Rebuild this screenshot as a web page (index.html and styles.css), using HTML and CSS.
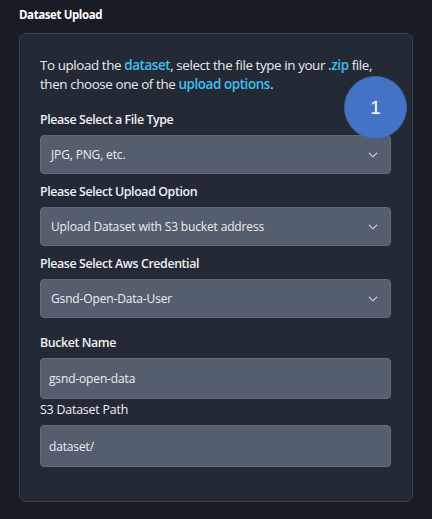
FILE: index.html
```html
<!DOCTYPE html>
<html>
<head>
<meta charset="utf-8">
<link rel="stylesheet" href="styles.css">
</head>
<body>
<div class="page">
  <h1 class="title">Dataset Upload</h1>
  <div class="card">
    <p class="intro">To upload the <span class="hl">dataset</span>, select the file type in your <span class="hl">.zip</span> file, then choose one of the <span class="hl">upload options</span>.</p>
    <div class="field">
      <label class="label">Please Select a File Type</label>
      <div class="select"><span>JPG, PNG, etc.</span><svg class="chev" width="10" height="6" viewBox="0 0 10 6"><path d="M1 0.8 L5 4.8 L9 0.8" fill="none" stroke="#d8dbe0" stroke-width="1.1"/></svg></div>
    </div>
    <div class="field">
      <label class="label">Please Select Upload Option</label>
      <div class="select"><span>Upload Dataset with S3 bucket address</span><svg class="chev" width="10" height="6" viewBox="0 0 10 6"><path d="M1 0.8 L5 4.8 L9 0.8" fill="none" stroke="#d8dbe0" stroke-width="1.1"/></svg></div>
    </div>
    <div class="field">
      <label class="label">Please Select Aws Credential</label>
      <div class="select"><span>Gsnd-Open-Data-User</span><svg class="chev" width="10" height="6" viewBox="0 0 10 6"><path d="M1 0.8 L5 4.8 L9 0.8" fill="none" stroke="#d8dbe0" stroke-width="1.1"/></svg></div>
    </div>
    <div class="field field-text">
      <label class="label">Bucket Name</label>
      <div class="input">gsnd-open-data</div>
    </div>
    <div class="field field-text2">
      <label class="label light">S3 Dataset Path</label>
      <div class="input">dataset/</div>
    </div>
    <div class="badge">1</div>
  </div>
</div>
</body>
</html>
```
FILE: styles.css
```css
* { box-sizing: border-box; }
html, body { margin: 0; padding: 0; }
body {
  background: #171c25;
  font-family: "Open Sans", "Noto Sans", sans-serif;
  color: #e4e6ea;
  width: 432px;
  height: 519px;
  overflow: hidden;
}
.page {
  padding: 5px 19px 0 19px;
  height: 519px;
}
.title {
  margin: 0;
  font-size: 11.5px;
  font-weight: 700;
  line-height: 20px;
  color: #ffffff;
  letter-spacing: -0.4px;
}
.card {
  position: relative;
  display: flex;
  flex-direction: column;
  margin-top: 8px;
  height: 469px;
  background: #232a36;
  border: 1px solid #394150;
  border-radius: 7px;
  padding: 22px 21px 0 20px;
}
.intro {
  margin: 0 0 17px 0;
  max-width: 348px;
  font-size: 13.4px;
  line-height: 19px;
  color: #e8eaee;
  letter-spacing: -0.4px;
}
.hl {
  color: #3ec0f0;
  font-weight: 600;
}
.field { display: flex; flex-direction: column; margin-bottom: 9px; }
.label {
  font-size: 12.4px;
  font-weight: 600;
  line-height: 18px;
  color: #eef0f3;
  margin-bottom: 6px;
  letter-spacing: -0.4px;
}
.label.light { font-weight: 400; letter-spacing: -0.2px; }
.select, .input {
  display: flex;
  align-items: center;
  justify-content: space-between;
  height: 39px;
  background: #555e6d;
  border: 1px solid #626b79;
  border-radius: 4px;
  padding: 0 12px 0 10px;
  font-size: 12px;
  color: #eceef1;
  letter-spacing: -0.15px;
}
.field-text { margin-top: 7px; margin-bottom: 2px; }
.field-text .input { height: 41px; padding-left: 8px; }
.field-text2 .input { height: 42px; padding-left: 8px; }
.chev { display: block; }
.badge {
  position: absolute;
  left: 324px;
  top: 42px;
  width: 63px;
  height: 63px;
  border-radius: 50%;
  background: #4472c4;
  border: 1px solid #3d65ad;
  color: #ffffff;
  font-family: "Liberation Sans", sans-serif;
  font-size: 19px;
  display: flex;
  align-items: center;
  justify-content: center;
}
```
